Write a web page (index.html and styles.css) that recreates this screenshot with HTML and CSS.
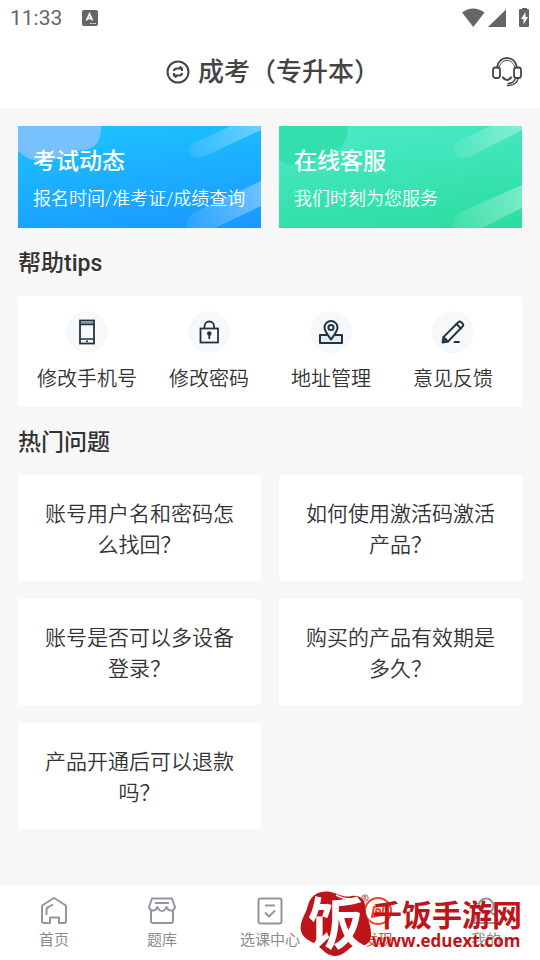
FILE: index.html
```html
<!DOCTYPE html>
<html lang="zh-CN">
<head>
<meta charset="utf-8">
<meta name="viewport" content="width=device-width, initial-scale=1">
<title>发现</title>
<link rel="stylesheet" href="styles.css">
</head>
<body>
<div class="status">
  <time class="clock">11:33</time>
  <svg class="status-app" width="16" height="16" viewBox="0 0 16 16"><rect width="16" height="16" rx="2" fill="#666"/><path d="M4.500 10.500 7.500 4 10.500 10.500M5.500 8.500h4" fill="none" stroke="#fff" stroke-width="1.700"/><path d="M8 13.500h1.300M10.300 13.500h1.300M12.600 13.500h1.300" stroke="#fff" stroke-width="1.200"/></svg>
  <svg class="status-icons" width="68" height="20" viewBox="0 0 68 20"><g fill="#666"><path d="M0 4.500Q11 -3.500 22.500 4.500L11.300 19Z"/><path d="M44 1.500V19H26Z"/><path d="M59 1h1V0h5v1h1q1 0 1 1v16q0 1-1 1h-8q-1 0-1-1V2q0-1 1-1Z"/></g><path d="M63.500 4 59 11h2.500v5.500L66 9h-2.500Z" fill="#fff"/></svg>
</div>
<header class="topbar">
  <h1 class="title">
    <button class="exam-switch" type="button">
      <svg width="24" height="24" viewBox="0 0 24 24" fill="none" stroke="#444" stroke-width="2"><circle cx="12" cy="12" r="10.500"/><path d="M8 11Q8 8.500 11 8.500h5M13.500 6.500l2.500 2v2.500M16 13Q16 15.500 13 15.500H8M10.500 17.500l-2.500-2V13"/></svg>
      <span>成考（专升本）</span>
    </button>
  </h1>
  <button class="support" type="button" aria-label="客服">
    <svg width="30" height="30" viewBox="0 0 30 30" fill="none" stroke="#484848" stroke-width="1.800" stroke-linecap="round"><path d="M5 10.500C6 4.500 10 1 15 1s9 3.500 10 9.500"/><path d="M7 10.500C8.500 6 11 3.500 15 3.500s6.500 2.500 8 7" stroke-width="1"/><rect x="1" y="10.500" width="7" height="10.500" rx="2.500"/><rect x="22" y="10.500" width="7" height="10.500" rx="2.500"/><path d="M11 20.500Q15 25.500 19 20.500" stroke-width="2.200"/><path d="M26 21.500Q25 28 15.500 28.500M23 22Q22 26 16 26.500" stroke-width="1.500"/></svg>
  </button>
</header>
<main class="content">
  <section class="banners">
    <a class="banner banner-blue" href="#news">
      <svg class="banner-art" viewBox="0 0 243 102" preserveAspectRatio="none"><defs><linearGradient id="ray"><stop offset="0" stop-color="#fff" stop-opacity=".08"/><stop offset="1" stop-color="#fff" stop-opacity=".34"/></linearGradient></defs><path d="M0 0H83Q84 21 67 24C52 25 45 34 24 35Q10 35 0 25Z" fill="#78c1ff"/><path d="M176 17 213 0H243V4L185 31Q174 34 171 25Q171 20 176 17ZM177 86 243 55V80L197 102H169Q167 91 177 86Z" fill="url(#ray)"/></svg>
      <strong class="banner-title">考试动态</strong>
      <span class="banner-text">报名时间/准考证/成绩查询</span>
    </a>
    <a class="banner banner-green" href="#service">
      <svg class="banner-art" viewBox="0 0 243 102" preserveAspectRatio="none"><path d="M0 0H69Q68 23 51 28C33 29 31 38 15 39Q5 39 0 34Z" fill="#33dfad"/><path d="M181 14 212 0H243V4L190 31Q178 34 175 25Q175 17 181 14ZM182 86 243 59V82L203 102H176Q174 90 182 86Z" fill="url(#ray)"/></svg>
      <strong class="banner-title">在线客服</strong>
      <span class="banner-text">我们时刻为您服务</span>
    </a>
  </section>
  <h2 class="section-title">帮助tips</h2>
  <nav class="tips" aria-label="帮助">
    <a class="tip" href="#phone"><span class="tip-icon"><svg viewBox="0 0 28 28"><rect x="7" y="2.500" width="14" height="23" fill="#f4fbff" stroke="#26333f" stroke-width="1.800"/><path d="M8 3.500h12v3H8Z" fill="#7e98a8"/><path d="M7 6.500h14M7 21h14" stroke="#26333f" stroke-width="1.500"/><path d="M13 23.300h2" stroke="#26333f" stroke-width="1.500"/></svg></span><span>修改手机号</span></a>
    <a class="tip" href="#password"><span class="tip-icon"><svg viewBox="0 0 28 28" fill="none" stroke="#26333f" stroke-width="1.800"><rect x="5.500" y="10.500" width="17.500" height="14" fill="#f4fbff"/><path d="M9.500 10V8.500a4.800 5 0 0 1 9.600 0V10"/><circle cx="14.300" cy="15.500" r="1.400" fill="#26333f"/><path d="M14.300 15v6"/></svg></span><span>修改密码</span></a>
    <a class="tip" href="#address"><span class="tip-icon"><svg viewBox="0 0 28 28" fill="none" stroke="#26333f" stroke-width="2" stroke-linejoin="round"><path d="M10 17H3v8h22v-8h-7" fill="#dff0f8"/><path d="M14 21.500C10 16 7.500 13 7.500 9.500a6.500 6.500 0 0 1 13 0C20.500 13 18 16 14 21.500Z" fill="#e7f4fb"/><circle cx="14" cy="9.500" r="2.600"/></svg></span><span>地址管理</span></a>
    <a class="tip" href="#feedback"><span class="tip-icon"><svg viewBox="0 0 28 28" fill="none" stroke="#26333f" stroke-width="1.900" stroke-linecap="round" stroke-linejoin="round"><path d="M3.500 24.500 4.500 19 19.500 4Q21 3 22.500 4.500L23.500 5.500Q25 7 23.500 8.500L9 23.500Z" fill="#eef8fd"/><path d="M17.500 6 22 10.500M4.500 19 9 23.500"/><path d="M4.500 23.500 5.500 22.500" stroke-width="2.500"/><path d="M15.500 24h4.500"/></svg></span><span>意见反馈</span></a>
  </nav>
  <h2 class="section-title">热门问题</h2>
  <section class="faq">
    <a class="question" href="#q1">账号用户名和密码怎么找回？</a>
    <a class="question" href="#q2">如何使用激活码激活产品？</a>
    <a class="question" href="#q3">账号是否可以多设备登录？</a>
    <a class="question" href="#q4">购买的产品有效期是多久？</a>
    <a class="question" href="#q5">产品开通后可以退款吗？</a>
  </section>
</main>
<footer class="bottom">
  <nav class="tabs" aria-label="主导航">
    <a class="tab" href="#home"><svg viewBox="0 0 28 28"><path d="M2 9.500Q2 8.500 3 8L13 1.500Q14 1 15 1.500L25 8Q26 8.500 26 9.500V24Q26 26 24 26H19V20.500H10V26H4Q2 26 2 24Z"/><path d="M6.500 18V13Q6.500 11 8.500 10L13 7.500"/></svg><span>首页</span></a>
    <a class="tab" href="#bank"><svg viewBox="0 0 28 28"><path d="M4 1.500H24L27 10Q26 14 22.500 13.500Q20 13.500 18.500 10Q17 14 14 14T9.500 10Q8 13.500 5.500 13.500Q2 14 1 10Z"/><path d="M3 14V24Q3 26 5 26H23Q25 26 25 24V14M7 6H21"/></svg><span>题库</span></a>
    <a class="tab" href="#courses"><svg viewBox="0 0 28 28"><rect x="2.500" y="1.500" width="23" height="25" rx="2"/><path d="M9 8.500H19M9 15.500 13 19.500 19 13.500"/></svg><span>选课中心</span></a>
    <a class="tab tab-active" href="#discover" aria-current="page"><svg viewBox="0 0 28 28"><circle cx="14" cy="14" r="13"/><path d="M10 10 20 8 18 18 8 20Z"/><circle cx="14" cy="14" r="2"/></svg><span>发现</span></a>
    <a class="tab" href="#mine"><svg viewBox="0 0 28 28"><circle cx="14" cy="9" r="7.500"/><path d="M2 26Q3 17 9 16M26 26Q25 17 19 16M2 26H26"/></svg><span>我的</span></a>
  </nav>
  <div class="watermark">
    <div class="seal">
      <svg class="seal-shape" viewBox="0 0 72 66"><path d="M8 14C11 4 19-1 31 1C40 3 43 7 52 5C61 4 66 9 65 18C65 26 71 30 71 43C71 53 66 55 59 53C49 54 45 66 34 65C25 64 22 57 14 52C5 48-1 43 1 33C3 25 6 22 8 14Z" fill="#bd1519"/><path d="M36 4Q47 10 58 7" fill="none" stroke="#fff" stroke-width="1.500"/></svg>
      <span class="seal-text">饭</span>
    </div>
    <svg class="reg" viewBox="0 0 8 8" fill="none" stroke="#b33a35"><circle cx="4" cy="4" r="3.200" stroke-width=".8"/><path d="M3 6V2.300h1.500q1 1 0 2H3M4.300 4.300 5.500 6" stroke-width=".8"/></svg>
    <div class="brand"><span class="brand-name">千饭手游网</span><span class="brand-url">www.eduext.com</span></div>
  </div>
</footer>
</body>
</html>
```
FILE: styles.css
```css
* {
  box-sizing: border-box;
}

body {
  margin: 0;
  min-height: 100vh;
  display: flex;
  flex-direction: column;
  background: #f7f7f7;
  color: #333;
  font-family: Roboto, "Noto Sans CJK SC", sans-serif;
}

a {
  color: inherit;
  text-decoration: none;
}

button {
  padding: 0;
  border: 0;
  background: none;
  color: inherit;
  font: inherit;
}

svg {
  display: block;
  flex: none;
}

.status {
  display: flex;
  align-items: center;
  height: 36px;
  padding: 0 10px;
  background: #fff;
}

.clock {
  color: #666;
  font-size: 21px;
  line-height: 36px;
}

.status-app {
  margin-left: 20px;
}

.status-icons {
  margin-left: auto;
}

.topbar {
  display: grid;
  grid-template-columns: 1fr auto 1fr;
  align-items: center;
  height: 72px;
  padding: 0 18px 0 24px;
  background: #fff;
}

.title {
  grid-column: 2;
  margin: 0;
  color: #444;
  font-size: 26px;
  font-weight: 500;
  line-height: 36px;
}

.exam-switch {
  display: flex;
  align-items: center;
  gap: 8px;
}

.support {
  justify-self: end;
}

.content {
  flex: 1;
  padding: 18px;
}

.banners,
.faq {
  display: grid;
  grid-template-columns: 1fr 1fr;
  gap: 18px;
}

.banner {
  position: relative;
  display: flex;
  flex-direction: column;
  gap: 6px;
  min-height: 102px;
  padding: 19px 15px 15px;
  color: #fff;
}

.banner-blue {
  background: linear-gradient(172deg, #1dc5ff, #1a97ff);
}

.banner-green {
  background: linear-gradient(172deg, #4ceaca, #2bdd9e);
}

.banner-art {
  position: absolute;
  inset: 0;
  width: 100%;
  height: 100%;
}

.banner-title {
  position: relative;
  font-size: 23px;
  font-weight: 500;
  line-height: 34px;
}

.banner-text {
  position: relative;
  font-size: 18px;
  font-weight: 350;
  line-height: 28px;
  white-space: nowrap;
}

.section-title {
  margin: 0;
  padding-top: 4px;
  font-size: 23px;
  font-weight: 500;
  line-height: 64px;
}

.tips {
  display: grid;
  grid-template-columns: repeat(4, 1fr);
  padding: 15px 8px 13px;
  border-radius: 3px;
  background: #fff;
}

.tip {
  display: flex;
  flex-direction: column;
  align-items: center;
  gap: 11px;
  font-size: 20px;
  font-weight: 350;
  line-height: 30px;
}

.tip-icon {
  display: grid;
  place-items: center;
  width: 42px;
  height: 42px;
  border-radius: 50%;
  background: #f7f8fa;
}

.tip-icon svg {
  width: 28px;
  height: 28px;
}

.question {
  padding: 24px 26px 20px;
  border-radius: 3px;
  background: #fff;
  font-size: 21px;
  font-weight: 350;
  line-height: 31px;
  text-align: center;
}

.bottom {
  position: relative;
  background: #fff;
}

.tabs {
  display: grid;
  grid-template-columns: repeat(5, 1fr);
  padding: 12px 0 9px;
}

.tab {
  display: flex;
  flex-direction: column;
  align-items: center;
  gap: 4px;
  color: #8b8b8b;
  font-size: 15px;
  line-height: 22px;
}

.tab svg {
  width: 28px;
  height: 28px;
  fill: none;
  stroke: #9396a2;
  stroke-width: 2;
  stroke-linejoin: round;
}

.tab-active {
  color: #f0442c;
}

.tab-active svg {
  stroke: #f0442c;
}

.watermark {
  position: absolute;
  right: 18px;
  bottom: 3px;
  display: flex;
  align-items: center;
  color: #bd1519;
  pointer-events: none;
}

.seal {
  position: relative;
  width: 72px;
  height: 66px;
}

.seal-shape {
  width: 72px;
  height: 66px;
}

.seal-text {
  position: absolute;
  inset: 0;
  color: #fff;
  font-size: 56px;
  font-weight: 700;
  line-height: 68px;
  text-align: center;
}

.reg {
  position: absolute;
  left: 61px;
  top: 3px;
  width: 8px;
  height: 8px;
}

.brand {
  display: flex;
  flex-direction: column;
  width: 150px;
}

.brand-name {
  padding-top: 2px;
  font-size: 30px;
  font-weight: 700;
  line-height: 32px;
}

.brand-url {
  font-family: "Open Sans", sans-serif;
  font-size: 17px;
  font-weight: 700;
  line-height: 18px;
}
```
